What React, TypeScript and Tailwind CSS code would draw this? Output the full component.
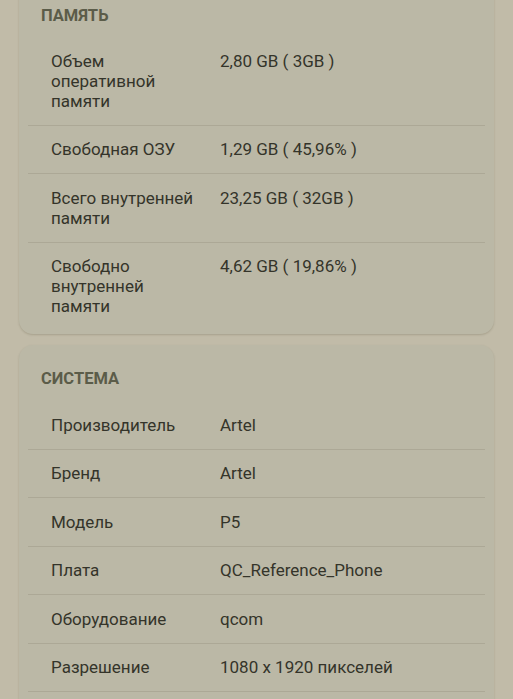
import React from 'react';

type Row = { label: string; value: string };

const memory: Row[] = [
  { label: 'Объем оперативной памяти', value: '2,80 GB ( 3GB )' },
  { label: 'Свободная ОЗУ', value: '1,29 GB ( 45,96% )' },
  { label: 'Всего внутренней памяти', value: '23,25 GB ( 32GB )' },
  { label: 'Свободно внутренней памяти', value: '4,62 GB ( 19,86% )' },
];

const system: Row[] = [
  { label: 'Производитель', value: 'Artel' },
  { label: 'Бренд', value: 'Artel' },
  { label: 'Модель', value: 'P5' },
  { label: 'Плата', value: 'QC_Reference_Phone' },
  { label: 'Оборудование', value: 'qcom' },
  { label: 'Разрешение', value: '1080 x 1920 пикселей' },
];

const Section: React.FC<{
  title: string;
  rows: Row[];
  last?: boolean;
  titleGap?: string;
  className?: string;
}> = ({ title, rows, last, titleGap = 'mb-[11px]', className = '' }) => (
  <div
    className={`rounded-[14px] bg-[#bbb8a6] px-[9px] pt-[24px] shadow-[0_1px_2px_rgba(90,85,60,0.25)] ${className}`}
  >
    <h2 className={`px-[13px] text-[16.5px] leading-[20px] font-bold text-[#5b5c49] ${titleGap}`}>{title}</h2>
    <div>
      {rows.map((r, i) => (
        <div
          key={r.label}
          className={`flex px-[23px] py-[13.75px] text-[17px] leading-[20px] text-[#34342a] ${
            i < rows.length - 1 || !last ? 'border-b border-[#aca896]' : ''
          }`}
        >
          <div className="w-[152px] shrink-0">{r.label}</div>
          <div className="ml-[17px]">{r.value}</div>
        </div>
      ))}
    </div>
  </div>
);

const App: React.FC = () => {
  return (
    <div
      className="h-[699px] overflow-hidden bg-[#c1bba8] px-[19px]"
      style={{ fontFamily: 'Roboto, "Noto Sans", sans-serif' }}
    >
      <Section title="ПАМЯТЬ" rows={memory} last className="-mt-[18px] pb-[4px]" />
      <Section title="СИСТЕМА" rows={system} titleGap="mb-[12px]" className="mt-[11px] pb-[40px]" />
    </div>
  );
};

export default App;
